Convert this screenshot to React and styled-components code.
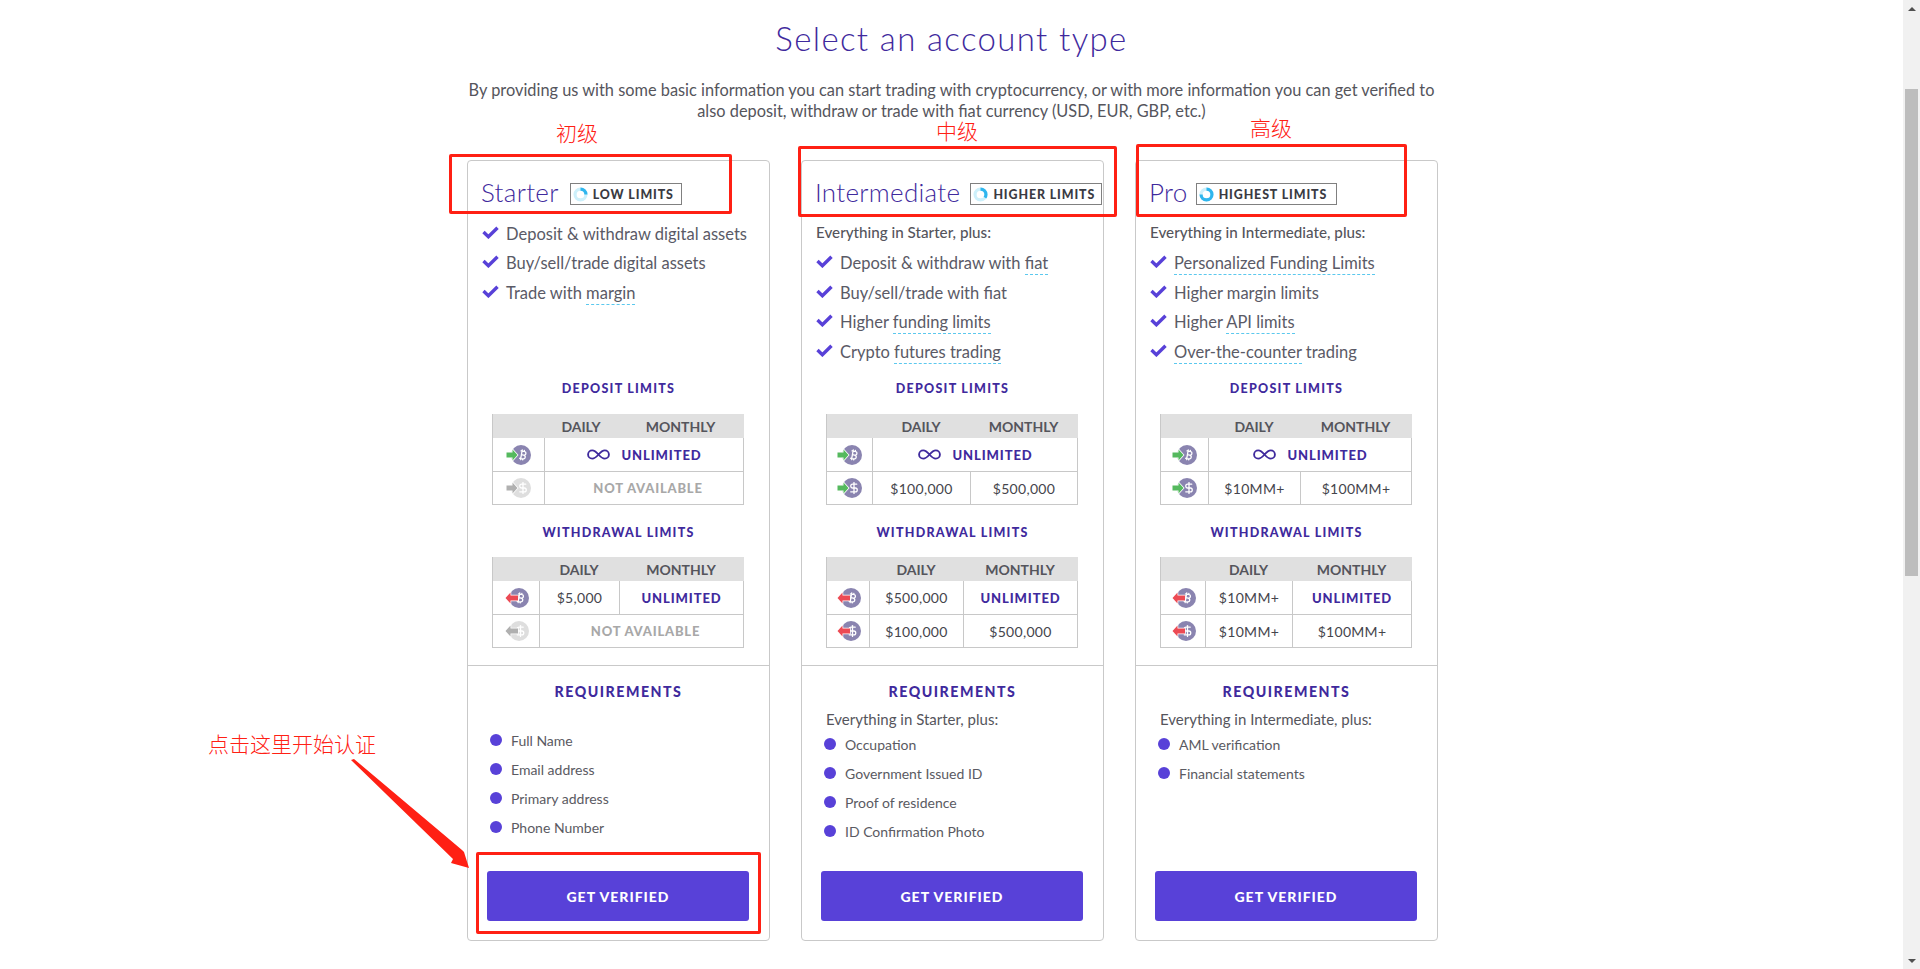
import React from "react";
import styled, { createGlobalStyle } from "styled-components";
import { Bitcoin, DollarSign, Infinity as InfinityIcon } from "lucide-react";

const GlobalStyle = createGlobalStyle`
  html, body {
    margin: 0;
    height: 100%;
    overflow: hidden;
    background: #fff;
    font-family: Lato, "Noto Sans", sans-serif;
    color: #5a5a62;
  }
`;

const Shell = styled.div`
  position: relative;
  display: flex;
  height: 969px;
`;

const Main = styled.main`
  flex: 1;
  padding-top: 18px;
`;

const Title = styled.h1`
  margin: 0;
  font-size: 33px;
  line-height: 40px;
  font-weight: 300;
  letter-spacing: 1.35px;
  text-align: center;
  color: #3f2a9d;
`;

const Intro = styled.p`
  margin: 21px 0 0;
  font-size: 16.35px;
  line-height: 21px;
  text-align: center;
  color: #55555c;
`;

const CardRow = styled.div`
  display: flex;
  justify-content: center;
  gap: 31px;
  margin-top: 39px;
  padding-left: 2px;
`;

const Card = styled.section`
  display: flex;
  flex-direction: column;
  box-sizing: border-box;
  width: 303px;
  height: 781px;
  border: 1px solid #c9c9c9;
  border-radius: 4px;
`;

const Upper = styled.div`
  padding: 22px 0 17px;
  border-bottom: 1px solid #c9c9c9;
`;

const CardHead = styled.div`
  display: flex;
  align-items: center;
  height: 22px;
  padding-left: 13px;
  margin-bottom: 14px;
`;

const Name = styled.h2`
  margin: -4px ${(p) => p.$gap}px 0 0;
  font-size: 26px;
  font-weight: 300;
  letter-spacing: 0.3px;
  white-space: nowrap;
  color: #3f2a9d;
`;

const Badge = styled.span`
  display: flex;
  align-items: center;
  gap: 5px;
  box-sizing: border-box;
  height: 22px;
  width: ${(p) => p.$width}px;
  padding-left: 2px;
  border: 1px solid #808080;
  font-size: 12.4px;
  font-weight: 900;
  letter-spacing: 0.9px;
  white-space: nowrap;
  color: #3a3a42;
`;

const Features = styled.div`
  height: 160px;
  padding-left: 14px;
`;

const FeatureIntro = styled.div`
  height: 29.5px;
  line-height: 27.5px;
  font-size: 15.2px;
  font-weight: 500;
  color: #55555c;
`;

const Feature = styled.div`
  display: flex;
  align-items: center;
  gap: 7px;
  height: 29.5px;
  font-size: 16.5px;
  color: #5a5a66;
`;

const Dashed = styled.span`
  padding-bottom: 1px;
  border-bottom: 1px dashed #5bc8ee;
`;

const LimitTitle = styled.h3`
  margin: 0;
  height: 20px;
  line-height: 20px;
  font-size: 12.5px;
  font-weight: 900;
  letter-spacing: 1.25px;
  text-align: center;
  color: #3f2a9d;
`;

const Table = styled.div`
  display: grid;
  grid-template-columns: ${(p) => p.$cols};
  grid-template-rows: 24px 33px 33px;
  box-sizing: content-box;
  width: 250px;
  margin: ${(p) => p.$before}px 0 ${(p) => p.$after}px 24px;
  border: 1px solid #c8c8c8;
  border-top: 0;
`;

const HeadCell = styled.div`
  display: flex;
  align-items: center;
  justify-content: center;
  margin: 0 -0.5px;
  background: #e0e0e0;
  font-size: 14px;
  font-weight: 700;
  color: #55555c;
`;

const Cell = styled.div`
  display: flex;
  align-items: center;
  justify-content: center;
  gap: 10px;
  grid-column: ${(p) => (p.$wide ? "span 2" : "auto")};
  border-top: 1px solid #c8c8c8;
  border-left: ${(p) => (p.$first ? "0" : "1px solid #c8c8c8")};
  font-size: 14px;
  letter-spacing: 0.3px;
  color: #45454c;
`;

const FirstRowCell = styled(Cell)`
  border-top: 0;
`;

const Unlimited = styled.span`
  font-size: 13px;
  font-weight: 900;
  letter-spacing: 0.9px;
  color: #3f2a9d;
`;

const NotAvailable = styled.span`
  padding-left: 8px;
  font-size: 13px;
  font-weight: 900;
  letter-spacing: 0.8px;
  color: #a8a8a8;
`;

const Lower = styled.div`
  display: flex;
  flex-direction: column;
  flex: 1;
  padding: 16px 19px 19px;
`;

const ReqTitle = styled.h3`
  margin: 0;
  height: 20px;
  line-height: 20px;
  font-size: 14.2px;
  font-weight: 900;
  letter-spacing: 1.5px;
  text-align: center;
  color: #3f2a9d;
`;

const ReqIntro = styled.div`
  height: 20px;
  margin: 7px 0 0 5px;
  line-height: 20px;
  font-size: 15px;
  color: #55555c;
`;

const ReqList = styled.ul`
  margin: ${(p) => p.$top}px 0 0;
  padding: 0 0 0 3px;
  list-style: none;
`;

const ReqItem = styled.li`
  display: flex;
  align-items: center;
  gap: 9px;
  height: 29px;
  font-size: 14px;
  color: #5a5a62;

  &::before {
    content: "";
    width: 12px;
    height: 12px;
    margin-top: -2px;
    border-radius: 50%;
    background: #5841d8;
  }
`;

const VerifyButton = styled.button`
  display: block;
  width: 262px;
  height: 50px;
  margin-top: auto;
  border: 0;
  border-radius: 3px;
  background: #5841d8;
  font-family: inherit;
  font-size: 14px;
  font-weight: 900;
  letter-spacing: 1px;
  color: #fff;
`;

const ScrollTrack = styled.aside`
  display: flex;
  flex-direction: column;
  align-items: center;
  width: 17px;
  background: #f1f1f1;
`;

const ScrollArrow = styled.div`
  width: 0;
  height: 0;
  margin: ${(p) => (p.$down ? "auto 0 6px" : "7px 0 0")};
  border-left: 4px solid transparent;
  border-right: 4px solid transparent;
  border-bottom: ${(p) => (p.$down ? "0" : "4px solid #505050")};
  border-top: ${(p) => (p.$down ? "4px solid #505050" : "0")};
`;

const ScrollThumb = styled.div`
  width: 13px;
  height: 487px;
  margin-top: 78px;
  background: #bdbdbd;
`;

// red marks drawn on top of the screenshot
const RedBox = styled.div`
  position: absolute;
  left: ${(p) => p.$x}px;
  top: ${(p) => p.$y}px;
  box-sizing: border-box;
  width: ${(p) => p.$w}px;
  height: ${(p) => p.$h}px;
  border: 3px solid #ff2014;
  border-radius: 2px;
  pointer-events: none;
`;

const RedLabel = styled.div`
  position: absolute;
  left: ${(p) => p.$x}px;
  top: ${(p) => p.$y}px;
  font-family: "Noto Sans CJK SC", sans-serif;
  font-size: 21px;
  font-weight: 300;
  line-height: 28px;
  white-space: nowrap;
  color: #ff2014;
`;

const ArrowMark = styled.svg`
  position: absolute;
  left: 340px;
  top: 750px;
`;

const CoinSvg = styled.svg`
  margin-left: ${(p) => (p.$out ? 3 : 0)}px;
`;

const Check = () => (
  <svg width="17" height="13" viewBox="0 0 16 12" style={{ flex: "none", marginTop: -3 }}>
    <path d="M1.4 5.6 L6 10 L14.6 1.6" fill="none" stroke="#5841d8" strokeWidth="3.2" />
  </svg>
);

const Ring = ({ share }) => (
  <svg width="15" height="15" viewBox="0 0 16 16" style={{ flex: "none" }}>
    <circle cx="8" cy="8" r="5.8" fill="none" stroke="#cdf0fb" strokeWidth="3.4" />
    <circle
      cx="8"
      cy="8"
      r="5.8"
      fill="none"
      stroke="#2fb6ee"
      strokeWidth="3.4"
      pathLength="100"
      strokeDasharray={`${share} 100`}
      transform="rotate(-90 8 8)"
    />
  </svg>
);

const CoinArrow = ({ coin, out, off }) => {
  const Glyph = coin === "btc" ? Bitcoin : DollarSign;
  const arrow = off ? "#b0b0b0" : out ? "#ec4a54" : "#55b95e";
  const points = out
    ? "13,7.5 5.5,7.5 5.5,4.5 0.5,10 5.5,15.5 5.5,12.5 13,12.5"
    : "0.5,7.5 6.5,7.5 6.5,4.5 11.5,10 6.5,15.5 6.5,12.5 0.5,12.5";
  return (
    <CoinSvg $out={out} width="25" height="20" viewBox="0 0 25 20">
      <circle cx={out ? 14 : 15} cy="10" r="10" fill={off ? "#dedede" : "#8a84b0"} />
      <Glyph x={out ? 9 : 10.5} y="3.5" width="13" height="13" color="#fff" strokeWidth="2.4" />
      <polygon points={points} fill={arrow} stroke="#fff" strokeWidth="1.5" paintOrder="stroke" />
    </CoinSvg>
  );
};

const UnlimitedValue = () => (
  <>
    <InfinityIcon size={25} color="#3f2a9d" strokeWidth={1.8} />
    <Unlimited>UNLIMITED</Unlimited>
  </>
);

const LimitTable = ({ cols, before, after, out, top, bottom }) => {
  const rows = [
    { coin: "btc", cells: top, Wrap: FirstRowCell },
    { coin: "usd", cells: bottom, Wrap: Cell },
  ];
  return (
    <Table $cols={cols} $before={before} $after={after}>
      <HeadCell />
      <HeadCell>DAILY</HeadCell>
      <HeadCell>MONTHLY</HeadCell>
      {rows.map(({ coin, cells, Wrap }) => {
        const off = cells === "none";
        return (
          <React.Fragment key={coin}>
            <Wrap $first>
              <CoinArrow coin={coin} out={out} off={off} />
            </Wrap>
            {off && (
              <Wrap $wide>
                <NotAvailable>NOT AVAILABLE</NotAvailable>
              </Wrap>
            )}
            {cells === "all" && (
              <Wrap $wide>
                <UnlimitedValue />
              </Wrap>
            )}
            {Array.isArray(cells) &&
              cells.map((value) => (
                <Wrap key={value}>
                  {value === "UNLIMITED" ? <Unlimited>UNLIMITED</Unlimited> : value}
                </Wrap>
              ))}
          </React.Fragment>
        );
      })}
    </Table>
  );
};

const plans = [
  {
    name: "Starter",
    gap: 11,
    badge: "LOW LIMITS",
    badgeWidth: 112,
    share: 25,
    features: [
      ["Deposit & withdraw digital assets"],
      ["Buy/sell/trade digital assets"],
      ["Trade with ", "margin"],
    ],
    deposit: { cols: "51px 74px 1fr", top: "all", bottom: "none" },
    withdraw: { cols: "46px 80px 1fr", top: ["$5,000", "UNLIMITED"], bottom: "none" },
    reqs: ["Full Name", "Email address", "Primary address", "Phone Number"],
  },
  {
    name: "Intermediate",
    gap: 10,
    intro: "Everything in Starter, plus:",
    badge: "HIGHER LIMITS",
    badgeWidth: 132,
    share: 35,
    features: [
      ["Deposit & withdraw with ", "fiat"],
      ["Buy/sell/trade with fiat"],
      ["Higher ", "funding limits"],
      ["Crypto ", "futures trading"],
    ],
    deposit: { cols: "45px 98px 1fr", top: "all", bottom: ["$100,000", "$500,000"] },
    withdraw: {
      cols: "42px 94px 1fr",
      top: ["$500,000", "UNLIMITED"],
      bottom: ["$100,000", "$500,000"],
    },
    reqIntro: "Everything in Starter, plus:",
    reqs: ["Occupation", "Government Issued ID", "Proof of residence", "ID Confirmation Photo"],
  },
  {
    name: "Pro",
    gap: 8,
    intro: "Everything in Intermediate, plus:",
    badge: "HIGHEST LIMITS",
    badgeWidth: 141,
    share: 75,
    features: [
      ["", "Personalized Funding Limits"],
      ["Higher margin limits"],
      ["Higher ", "API limits"],
      ["", "Over-the-counter", " trading"],
    ],
    deposit: { cols: "47px 92px 1fr", top: "all", bottom: ["$10MM+", "$100MM+"] },
    withdraw: {
      cols: "44px 87px 1fr",
      top: ["$10MM+", "UNLIMITED"],
      bottom: ["$10MM+ ", "$100MM+"],
    },
    reqIntro: "Everything in Intermediate, plus:",
    reqs: ["AML verification", "Financial statements"],
  },
];

const PlanCard = ({ plan }) => (
  <Card>
    <Upper>
      <CardHead>
        <Name $gap={plan.gap}>{plan.name}</Name>
        <Badge $width={plan.badgeWidth}>
          <Ring share={plan.share} />
          {plan.badge}
        </Badge>
      </CardHead>
      <Features>
        {plan.intro && <FeatureIntro>{plan.intro}</FeatureIntro>}
        {plan.features.map(([before, dashed, after]) => (
          <Feature key={before + dashed}>
            <Check />
            <span>
              {before}
              {dashed && <Dashed>{dashed}</Dashed>}
              {after}
            </span>
          </Feature>
        ))}
      </Features>
      <LimitTitle>DEPOSIT LIMITS</LimitTitle>
      <LimitTable {...plan.deposit} before={15} after={18} />
      <LimitTitle>WITHDRAWAL LIMITS</LimitTitle>
      <LimitTable {...plan.withdraw} before={14} after={0} out />
    </Upper>
    <Lower>
      <ReqTitle>REQUIREMENTS</ReqTitle>
      {plan.reqIntro && <ReqIntro>{plan.reqIntro}</ReqIntro>}
      <ReqList $top={plan.reqIntro ? 1 : 24}>
        {plan.reqs.map((req) => (
          <ReqItem key={req}>{req}</ReqItem>
        ))}
      </ReqList>
      <VerifyButton>GET VERIFIED</VerifyButton>
    </Lower>
  </Card>
);

const App = () => (
  <Shell>
    <GlobalStyle />
    <Main>
      <Title>Select an account type</Title>
      <Intro>
        By providing us with some basic information you can start trading with cryptocurrency, or
        with more information you can get verified to
        <br />
        also deposit, withdraw or trade with fiat currency (USD, EUR, GBP, etc.)
      </Intro>
      <CardRow>
        {plans.map((plan) => (
          <PlanCard key={plan.name} plan={plan} />
        ))}
      </CardRow>
    </Main>
    <ScrollTrack>
      <ScrollArrow />
      <ScrollThumb />
      <ScrollArrow $down />
    </ScrollTrack>

    <RedBox $x={449} $y={154} $w={283} $h={60} />
    <RedBox $x={798} $y={146} $w={319} $h={71} />
    <RedBox $x={1136} $y={144} $w={271} $h={73} />
    <RedBox $x={476} $y={852} $w={285} $h={82} />
    <RedLabel $x={556} $y={118}>初级</RedLabel>
    <RedLabel $x={936} $y={116}>中级</RedLabel>
    <RedLabel $x={1250} $y={113}>高级</RedLabel>
    <RedLabel $x={208} $y={729}>点击这里开始认证</RedLabel>
    <ArrowMark width="135" height="125" viewBox="0 0 135 125">
      <polygon points="11,10 14,9 122,100 124,102 129,118 111,113 113,109" fill="#ff2014" />
    </ArrowMark>
  </Shell>
);

export default App;
